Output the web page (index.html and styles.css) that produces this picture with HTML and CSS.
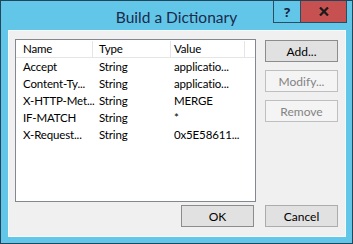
FILE: index.html
```html
<!DOCTYPE html>
<html lang="en">
<head>
    <meta charset="UTF-8">
    <title>Build a Dictionary</title>
    <link rel="stylesheet" href="styles.css">
</head>
<body>
    <div class="window">
        <div class="titlebar">
            <span class="title">Build a Dictionary</span>
            <div class="caption-buttons">
                <div class="help-btn">?</div>
                <div class="close-btn">
                    <svg width="10" height="9" viewBox="0 0 10 9">
                        <path d="M1 0.5 L9 8.5 M9 0.5 L1 8.5" stroke="#1b1b1b" stroke-width="2.2" fill="none"/>
                    </svg>
                </div>
            </div>
        </div>

        <div class="client">
            <div class="top-row">
                <div class="listview">
                    <div class="lv-header">
                        <div class="col col-name">Name</div>
                        <div class="col col-type">Type</div>
                        <div class="col col-value">Value</div>
                    </div>
                    <div class="lv-row">
                        <div class="cell col-name">Accept</div>
                        <div class="cell col-type">String</div>
                        <div class="cell col-value">applicatio...</div>
                    </div>
                    <div class="lv-row">
                        <div class="cell col-name">Content-Ty...</div>
                        <div class="cell col-type">String</div>
                        <div class="cell col-value">applicatio...</div>
                    </div>
                    <div class="lv-row">
                        <div class="cell col-name">X-HTTP-Met...</div>
                        <div class="cell col-type">String</div>
                        <div class="cell col-value">MERGE</div>
                    </div>
                    <div class="lv-row">
                        <div class="cell col-name">IF-MATCH</div>
                        <div class="cell col-type">String</div>
                        <div class="cell col-value">*</div>
                    </div>
                    <div class="lv-row">
                        <div class="cell col-name">X-Request...</div>
                        <div class="cell col-type">String</div>
                        <div class="cell col-value">0x5E58611...</div>
                    </div>
                </div>

                <div class="side-buttons">
                    <button class="btn btn-default">Add...</button>
                    <button class="btn" disabled>Modify...</button>
                    <button class="btn" disabled>Remove</button>
                </div>
            </div>

            <div class="bottom-row">
                <button class="btn btn-default">OK</button>
                <button class="btn">Cancel</button>
            </div>
        </div>
    </div>
</body>
</html>
```

FILE: styles.css
```css
html, body {
    margin: 0;
    padding: 0;
}

body {
    font-family: Lato, "Noto Sans", sans-serif;
    font-size: 12px;
    color: #000;
    background: #1f3f52;
}

.window {
    position: relative;
    width: 353px;
    height: 244px;
    box-sizing: border-box;
    border: 1px solid #22455a;
    background: #62c6e8;
    display: flex;
    flex-direction: column;
}

.titlebar {
    height: 29px;
    display: flex;
    align-items: center;
    justify-content: center;
}

.title {
    font-size: 15.5px;
    color: #1c2a4b;
    margin-top: 2px;
}

.caption-buttons {
    position: absolute;
    top: 0;
    right: 5px;
    display: flex;
    height: 22px;
}

.help-btn {
    width: 28px;
    box-sizing: border-box;
    border: 1px solid #2b4d62;
    border-top: none;
    display: flex;
    align-items: center;
    justify-content: center;
    font-family: "Noto Sans", sans-serif;
    font-weight: bold;
    font-size: 13px;
    color: #14243f;
}

.close-btn {
    width: 46px;
    box-sizing: border-box;
    border: 1px solid #2b4d62;
    border-left: none;
    border-top: none;
    background: #c75050;
    display: flex;
    align-items: center;
    justify-content: center;
}

.client {
    margin: 0 6px 6px 7px;
    height: 207px;
    box-sizing: border-box;
    border: 1px solid #f4fafd;
    background: #f0f0f0;
    padding: 8px 7px 9px 6px;
    display: flex;
    flex-direction: column;
}

.top-row {
    display: flex;
    gap: 9px;
}

.listview {
    width: 241px;
    height: 163px;
    box-sizing: border-box;
    border: 1px solid #828790;
    background: #fff;
    font-size: 11.5px;
    letter-spacing: -0.15px;
}

.lv-header {
    display: flex;
    height: 18px;
    box-sizing: border-box;
    border-bottom: 1px solid #e5e5e5;
    padding-top: 1px;
}

.lv-header .col {
    border-right: 1px solid #e5e5e5;
    line-height: 16px;
}

.lv-row {
    display: flex;
    height: 17px;
    line-height: 17px;
}

.col,
.cell {
    box-sizing: border-box;
    white-space: nowrap;
}

.col-name {
    width: 77px;
    padding-left: 7px;
}

.col-type {
    width: 78px;
    padding-left: 6px;
}

.col-value {
    width: 74px;
    padding-left: 3px;
}

.side-buttons {
    display: flex;
    flex-direction: column;
    gap: 8px;
    padding-top: 1px;
}

.btn {
    width: 73px;
    height: 22px;
    box-sizing: border-box;
    border: 1px solid #acacac;
    background: #e1e1e1;
    font-family: inherit;
    font-size: 12px;
    color: #000;
    padding: 0;
}

.btn-default {
    border-color: #8c8c8c;
}

.btn:disabled {
    border-color: #bfbfbf;
    background: #f4f4f4;
    color: #838383;
}

.bottom-row {
    margin-top: auto;
    display: flex;
    justify-content: flex-end;
    gap: 11px;
}
```
